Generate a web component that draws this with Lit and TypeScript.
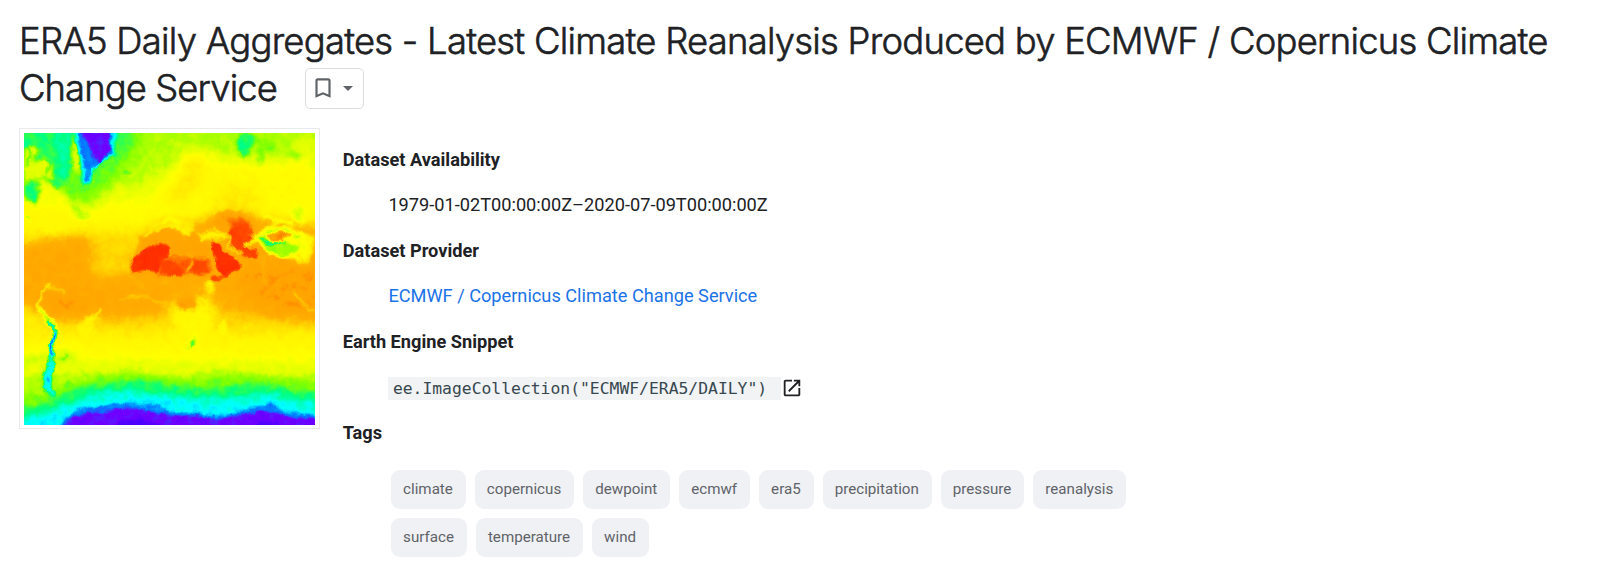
import { LitElement, html, css, svg } from "lit";
import { customElement } from "lit/decorators.js";

// Surface temperature thumbnail. Shapes are painted in grey, where each palette
// stop is 15 grey levels apart, and a transfer table turns grey into colour.
const PALETTE = [
  "000080", "0000d9", "4000ff", "7000ff", "0080ff", "00ffff", "00ff80", "80ff00", "daff00",
  "ffff00", "fff500", "ffda00", "ffb000", "ffa400", "ff4f00", "ff2f00", "ff2500", "ff00ff",
];
const channel = (n: number) =>
  PALETTE.map((c) => (parseInt(c.slice(n * 2, n * 2 + 2), 16) / 255).toFixed(3)).join(" ");
const level = (v: number) => {
  const g = Math.round(v * 15);
  return `rgb(${g},${g},${g})`;
};

type Shape = [number, string];

const BASE: [number, number][] = [
  [0, 7.3], [0.1, 7.7], [0.2, 8.5], [0.28, 9.3], [0.34, 10.3], [0.4, 11.2], [0.48, 11.8], [0.53, 12.3],
  [0.57, 12.2], [0.61, 11.8], [0.65, 11], [0.69, 10.2], [0.75, 9.3], [0.8, 8.4], [0.85, 7.4], [1, 7],
];

const SOFT: Shape[] = [
  [7.6, "M400 0L920 0L920 70L700 70L560 60L470 90L400 190L330 200L360 120Z"],
  [9.3, "M540 95L640 120L920 130L920 300L640 280L520 300L420 270L440 210L500 150Z"],
  [10.6, "M530 100L590 110L570 200L500 260L460 230L500 190Z"],
  [10.4, "M600 190L740 190L760 260L640 270Z"],
  [8.6, "M860 60L920 60L920 140L850 130Z"],
  [6.8, "M0 0L410 0L380 90L320 180L250 260L180 250L140 200L0 200Z"],
  [6.3, "M310 0L375 0L350 90L290 130L300 60Z"],
  [6.3, "M0 0L200 0L190 120L140 160L0 110Z"],
  [9.6, "M0 250L180 245L220 310L200 340L0 330Z"],
  [12.5, "M0 380L120 360L220 340L260 380L240 440L230 480L360 490L480 515L480 560L300 590L170 585L110 560L0 520Z"],
  [10, "M0 560L80 580L110 640L0 650Z"],
  [11, "M250 370L350 340L360 420L340 460L240 460Z"],
  [12.3, "M400 340L560 300L640 270L950 320L950 610L700 560L600 480L400 480Z"],
  [13, "M700 430L950 420L950 600L780 580L680 500Z"],
  [13, "M100 520L200 520L240 560L200 590L130 590L100 560Z"],
  [9.6, "M470 560L600 530L620 610L560 670L500 650Z"],
  [7.6, "M0 720L110 700L200 680L180 780L130 830L0 830Z"],
];

const BANDS: Shape[] = [
  [8.4, "M20 735L110 720L220 735L320 725L430 725L520 745L620 735L700 725L800 740L920 730L920 940L20 940Z"],
  [7.5, "M20 775L110 760L190 765L280 755L370 745L460 760L540 765L640 748L740 757L850 765L920 760L920 940L20 940Z"],
  [6.9, "M20 830L120 815L180 785L270 772L380 760L480 776L560 782L640 768L760 772L840 785L920 780L920 940L20 940Z"],
  [6.1, "M20 872L110 850L190 810L260 795L390 783L500 800L600 808L700 793L780 795L850 812L920 810L920 940L20 940Z"],
  [5.3, "M20 895L110 875L190 840L270 815L380 810L480 825L600 832L700 828L790 818L860 840L920 846L920 940L20 940Z"],
  [5, "M20 912L120 890L180 862L260 838L390 832L500 845L620 856L700 850L790 832L860 858L920 870L920 940L20 940Z"],
];

const COLD: Shape[] = [
  [4, "M140 940L165 900L205 866L260 864L315 847L390 855L440 855L480 873L560 878L610 888L680 880L720 865L785 850L825 875L920 888L920 940Z"],
  [3, "M150 940L175 905L215 880L280 880L330 864L400 868L450 876L480 888L560 889L620 899L680 887L740 875L800 874L830 890L920 900L920 940Z"],
  [2.3, "M310 940L330 902L370 897L410 902L450 915L460 940Z"],
  [2.3, "M700 940L750 906L800 908L840 940Z"],
];

const MID: Shape[] = [
  [6.2, "M40 20L90 20L105 60L80 100L55 80L40 90Z"],
  [5.8, "M130 20L185 20L195 80L178 130L170 190L150 170L135 90Z"],
  [6.2, "M90 80L145 100L150 170L165 200L140 215L118 180L125 130Z"],
  [8.4, "M42 85L72 75L90 110L125 130L130 175L100 170L70 185L42 180Z"],
  [8.8, "M90 185L120 195L150 220L180 250L90 260L85 215Z"],
  [6.1, "M38 190L75 175L92 210L78 262L60 240L38 238Z"],
  [6.3, "M62 110L100 95L98 120L72 135Z"],
  [8.2, "M192 40L212 70L212 130L206 165L190 150L184 100Z"],
  [7.4, "M175 235L205 262L240 290L220 303L195 285Z"],
  [6.2, "M680 55L705 35L730 45L722 100L705 115L680 95Z"],
  [6.9, "M730 40L790 70L795 95L770 90L755 130L742 135L745 90Z"],
  [7.2, "M830 95L880 100L860 120L835 112Z"],
  [12.9, "M590 300L650 270L720 290L730 340L660 350L630 330Z"],
  [14, "M660 300L690 290L725 310L735 345L690 350L665 335Z"],
  [10.4, "M430 290L480 285L545 290L555 330L520 345L480 315L410 335Z"],
  [12.8, "M395 350L470 320L500 345L540 340L600 370L590 460L380 470L370 430Z"],
  [13.8, "M470 410L600 410L610 460L590 466L440 468Z"],
  [13, "M500 530L550 525L560 565L510 570Z"],
  [10.2, "M560 345L600 330L640 345L620 362L570 362Z"],
  [8.1, "M520 690L540 655L565 640L560 680L535 694Z"],
  [10, "M200 640L215 600L260 580L250 630L210 670Z"],
  [8, "M840 275L870 255L885 290L875 310L855 300Z"],
  [9.8, "M590 480L606 470L608 500L598 520L582 500Z"],
  [9.6, "M850 330L915 350L900 410L880 440L850 415Z"],
];

const FINE: Shape[] = [
  [5.2, "M186 30L322 30L318 70L312 85L314 108L285 118L264 138L248 160L242 190L224 193L214 176L210 110Z"],
  [4, "M200 30L310 30L304 92L310 102L290 112L272 130L248 146L238 184L224 184L220 130L215 89Z"],
  [3, "M216 30L302 30L298 92L280 108L270 128L252 112L236 82Z"],
  [6.4, "M342 156L366 156L360 167L346 164Z"],
  [15, "M358 442L381 404L416 380L446 370L475 376L478 410L455 425L440 455L400 450L364 460Z"],
  [14.3, "M455 425L490 425L520 455L515 468L480 465L450 455Z"],
  [14.2, "M555 425L590 420L595 458L552 458Z"],
  [15, "M603 362L630 373L660 408L690 430L682 452L645 466L622 452L610 410Z"],
  [14.3, "M645 350L665 325L695 320L715 345L735 355L705 380L745 390L740 415L700 415L670 390Z"],
  [14, "M600 470L655 462L630 485L608 488Z"],
  [9, "M732 350L770 325L830 318L880 340L895 375L880 425L850 410L820 414L775 400L750 370Z"],
  [7.3, "M745 350L775 332L830 325L860 340L830 345L790 345L765 355L790 360L830 365L870 380L860 400L820 410L780 398L760 375Z"],
  [13.1, "M765 345L815 332L850 338L812 362L775 364Z"],
  [5.8, "M740 345L756 350L765 365L800 364L832 360L822 370L770 375L752 362Z"],
  [7, "M845 350L868 350L868 358L850 356Z"],
  [6.1, "M545 668L558 660L556 680L543 682Z"],
  [9.6, "M645 598L650 612L638 648L626 650L628 625Z"],
];

// Mountain chains, coasts and island arcs: level, width, path.
const LINES: [number, number, string][] = [
  [9.6, 6, "M118 495L96 520L86 555L92 580L112 600"],
  [7, 8, "M90 570L106 598L124 606L135 630"],
  [5.5, 15, "M120 603L135 630L128 665L122 710L125 745L112 780L112 805L128 826"],
  [5.1, 22, "M124 735L116 765L112 800"],
  [2.7, 6, "M131 640L124 668L122 702"],
  [4, 8, "M114 775L116 784"],
  [6.6, 7, "M170 710L158 716M174 785L164 806"],
  [10.8, 6, "M110 505L150 510L166 520"],
  [10, 6, "M232 620L260 578L274 568"],
  [10.4, 5, "M852 516L880 550L900 572L914 572"],
  [10.4, 7, "M610 320L640 345L660 350L655 375L675 395L695 403"],
  [9.6, 7, "M702 375L735 368L745 345L770 325L820 300L850 318"],
  [8.8, 6, "M760 285L800 300L850 310M460 305L490 296L505 310"],
  [10, 8, "M575 360L600 340L640 350M598 490L602 515M575 530L590 545L584 580"],
  [10.2, 5, "M690 180L686 265"],
  [11.6, 5, "M755 410L766 490M860 400L885 430"],
  [9.8, 6, "M440 330L480 318L515 328L540 345M405 350L430 330"],
  [11.6, 14, "M330 535L400 530L470 555"],
  [10.5, 5, "M50 365L75 340L100 320M485 590L490 640"],
  [11.8, 6, "M45 470L80 500M375 485L400 500M450 490L472 490M530 400L550 410M530 450L550 430"],
  [6.2, 6, "M45 60L60 95L50 140M100 55L120 75M92 120L120 125L112 160M45 292L56 300"],
];

const shapes = (list: Shape[]) => list.map(([v, d]) => svg`<path d=${d} fill=${level(v)} />`);

const thermalMap = () => html`
  <svg class="map" viewBox="42 39 873 876" preserveAspectRatio="none" aria-hidden="true">
    <defs>
      <linearGradient id="base" gradientUnits="userSpaceOnUse" x1="0" y1="39" x2="0" y2="915">
        ${BASE.map(([o, v]) => svg`<stop offset=${o} stop-color=${level(v)} />`)}
      </linearGradient>
      <filter id="soft" x="-10%" y="-10%" width="120%" height="120%" color-interpolation-filters="sRGB">
        <feGaussianBlur stdDeviation="20" />
      </filter>
      <filter id="bands" x="-10%" y="-10%" width="120%" height="120%" color-interpolation-filters="sRGB">
        <feGaussianBlur stdDeviation="7" />
      </filter>
      <filter id="mid" x="-10%" y="-10%" width="120%" height="120%" color-interpolation-filters="sRGB">
        <feGaussianBlur stdDeviation="6" />
      </filter>
      <filter id="fine" x="-10%" y="-10%" width="120%" height="120%" color-interpolation-filters="sRGB">
        <feGaussianBlur stdDeviation="2.8" />
      </filter>
      <filter id="thermal" filterUnits="userSpaceOnUse" x="0" y="0" width="960" height="960"
        color-interpolation-filters="sRGB">
        <feTurbulence type="fractalNoise" baseFrequency="0.035" numOctaves="3" seed="7" result="noise" />
        <feDisplacementMap in="SourceGraphic" in2="noise" scale="20" xChannelSelector="R" yChannelSelector="G" result="warped" />
        <feColorMatrix in="noise" type="matrix" values="0 0 1 0 0  0 0 1 0 0  0 0 1 0 0  0 0 0 0 1" result="grain" />
        <feComposite in="warped" in2="grain" operator="arithmetic" k1="0" k2="1" k3="0.05" k4="-0.025" />
        <feComponentTransfer>
          <feFuncR type="table" tableValues=${channel(0)} />
          <feFuncG type="table" tableValues=${channel(1)} />
          <feFuncB type="table" tableValues=${channel(2)} />
          <feFuncA type="linear" slope="0" intercept="1" />
        </feComponentTransfer>
      </filter>
    </defs>
    <g filter="url(#thermal)">
      <rect x="0" y="0" width="960" height="960" fill="url(#base)" />
      <g filter="url(#soft)">${shapes(SOFT)}</g>
      <g filter="url(#bands)">${shapes(BANDS)}</g>
      <g filter="url(#mid)">${shapes(MID)}</g>
      <g filter="url(#fine)">
        ${shapes(COLD)} ${shapes(FINE)}
        ${LINES.map(([v, w, d]) => svg`<path d=${d} fill="none" stroke=${level(v)} stroke-width=${w} stroke-linecap="round" stroke-linejoin="round" />`)}
      </g>
    </g>
  </svg>
`;

const TAGS = [
  "climate", "copernicus", "dewpoint", "ecmwf", "era5", "precipitation",
  "pressure", "reanalysis", "surface", "temperature", "wind",
];

@customElement("app-root")
export class AppRoot extends LitElement {
  static styles = css`
    :host {
      display: block;
      box-sizing: border-box;
      height: 566px;
      overflow: hidden;
      padding: 18px 19px 0;
      background: #fff;
      color: #202124;
      font: 400 18.2px/27.3px Roboto, sans-serif;
    }
    .title {
      margin: 0;
      font: 300 36.4px/47px Inter, sans-serif;
      white-space: nowrap;
      -webkit-text-stroke: 0.6px #202124;
    }
    .line {
      display: flex;
      align-items: center;
      height: 47px;
    }
    .line + .line { height: 46px; }
    .first { letter-spacing: -0.74px; }
    .second { letter-spacing: -0.9px; }
    .tail { width: 286px; }
    .save {
      box-sizing: border-box;
      display: flex;
      align-items: center;
      width: 59px;
      height: 41px;
      padding: 0 0 0 4px;
      border: 1px solid #dadce0;
      border-radius: 5px;
      background: #fff;
    }
    .bookmark { width: 26px; height: 26px; fill: #5f6368; }
    .caret { width: 10px; height: 5px; margin-left: 7px; fill: #5f6368; }
    .body {
      display: flex;
      align-items: flex-start;
      gap: 22.7px;
      margin-top: 17px;
    }
    .frame {
      box-sizing: border-box;
      flex: none;
      width: 301px;
      height: 301px;
      padding: 4px 4px 3px;
      border: 1px solid #e8eaed;
    }
    .map { display: block; width: 291px; height: 292px; }
    .facts {
      margin: 18px 0 0;
      display: flex;
      flex-direction: column;
      gap: 18.2px;
    }
    .term { height: 27.3px; font-weight: 700; }
    .value { height: 27.3px; margin: 0 0 0 45.7px; white-space: nowrap; }
    .link { color: #1a73e8; text-decoration: none; }
    .snippet { display: flex; align-items: center; padding-top: 1px; margin-bottom: -1px; }
    .code {
      box-sizing: border-box;
      width: 393px;
      height: 23px;
      padding: 0 4.5px;
      background: #f1f3f4;
      color: #37474f;
      font: 400 16.38px/23px "DejaVu Sans Mono", monospace;
    }
    .open { width: 22px; height: 22px; margin-left: -0.5px; fill: #202124; }
    .tags {
      display: flex;
      flex-wrap: wrap;
      gap: 9px;
      width: 760px;
      margin: 6px 0 0 48.2px;
    }
    .tag {
      height: 39px;
      padding: 0 12.8px 0 12.2px;
      border-radius: 9px;
      background: #f0f1f5;
      color: #5f6368;
      font-size: 15.15px;
      line-height: 38px;
    }
  `;

  render() {
    return html`
      <h1 class="title">
        <div class="line">
          <span class="first">ERA5 Daily Aggregates - Latest Climate Reanalysis Produced by ECMWF / Copernicus Climate</span>
        </div>
        <div class="line">
          <span class="tail"><span class="second">Change Service</span></span>
          <button class="save" aria-label="Save">
            <svg class="bookmark" viewBox="0 0 24 24">
              <path d="M17 3H7c-1.1 0-1.99.9-1.99 2L5 21l7-3 7 3V5c0-1.100-.9-2-2-2zm0 15l-5-2.180L7 18V5h10v13z" />
            </svg>
            <svg class="caret" viewBox="0 0 10 5"><path d="M0 0h10L5 5z" /></svg>
          </button>
        </div>
      </h1>
      <div class="body">
        <div class="frame">${thermalMap()}</div>
        <dl class="facts">
          <dt class="term">Dataset Availability</dt>
          <dd class="value">1979-01-02T00:00:00Z–2020-07-09T00:00:00Z</dd>
          <dt class="term">Dataset Provider</dt>
          <dd class="value"><a class="link">ECMWF / Copernicus Climate Change Service</a></dd>
          <dt class="term">Earth Engine Snippet</dt>
          <dd class="value snippet">
            <code class="code">ee.ImageCollection("ECMWF/ERA5/DAILY")</code>
            <svg class="open" viewBox="0 0 24 24">
              <path d="M19 19H5V5h7V3H5c-1.110 0-2 .9-2 2v14c0 1.100.89 2 2 2h14c1.100 0 2-.9 2-2v-7h-2v7zM14 3v2h3.590l-9.830 9.830 1.410 1.410L19 6.410V10h2V3h-7z" />
            </svg>
          </dd>
          <dt class="term">Tags</dt>
          <dd class="tags">${TAGS.map((t) => html`<span class="tag">${t}</span>`)}</dd>
        </dl>
      </div>
    `;
  }
}
